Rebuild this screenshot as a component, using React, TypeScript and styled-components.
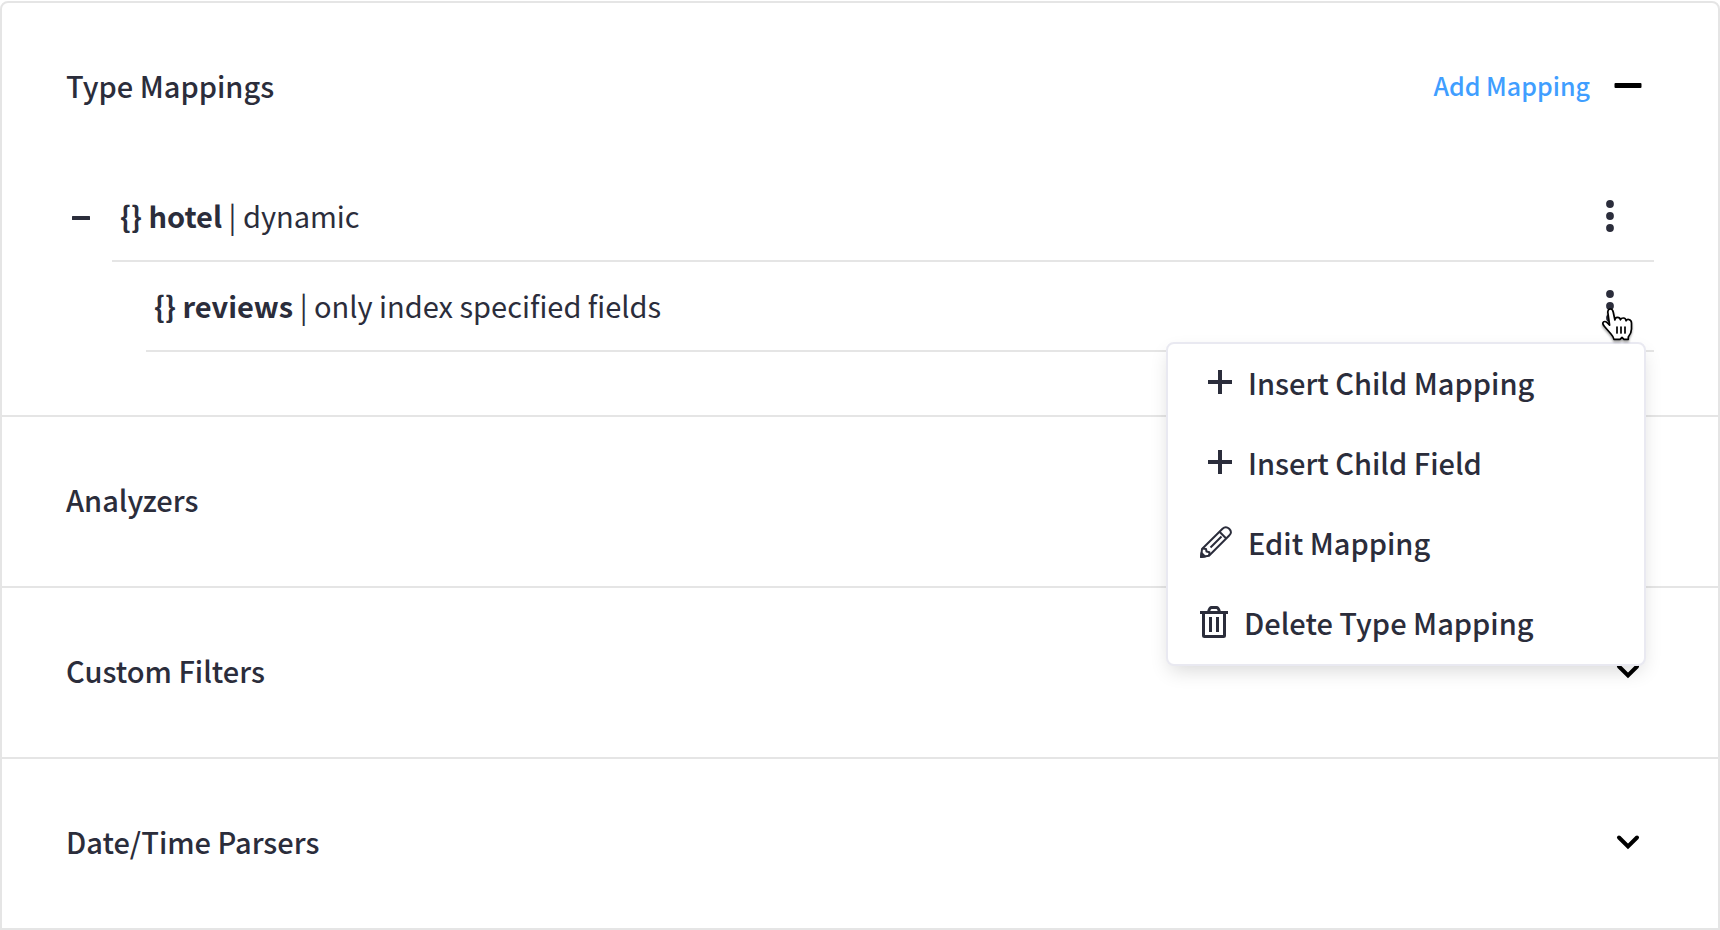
import React from "react";
import styled, { createGlobalStyle } from "styled-components";

const ink = "#2b2d3b";
const line = "#e5e5e5";

const GlobalStyle = createGlobalStyle`
  * { box-sizing: border-box; }
  body { margin: 0; background: #fff; }
  button { font: inherit; color: inherit; background: none; border: 0; padding: 0; margin: 0; cursor: pointer; }
  svg { display: block; flex: none; }
`;

const Panel = styled.main`
  margin-top: 1px;
  border: 2px solid ${line};
  border-radius: 8px 8px 0 0;
  color: ${ink};
  font-family: "Noto Sans CJK SC", "Liberation Sans", sans-serif;
  font-size: 29px;
  line-height: 40px;
`;

const Section = styled.section`
  & + & { border-top: 2px solid ${line}; }
`;

const SectionHeader = styled.header`
  display: flex;
  align-items: center;
  justify-content: space-between;
  padding: 62px 76px 67px 64px;
`;

const Title = styled.h2`
  margin: 0;
  font-size: inherit;
  font-weight: 500;
`;

const Actions = styled.div`
  display: flex;
  align-items: center;
  gap: 24px;
`;

const AddButton = styled.button`
  color: #409eff;
  font-size: 25px;
  font-weight: 500;
`;

const Tree = styled.ul`
  list-style: none;
  margin: 0;
  padding: 0 64px 63px 64px;
`;

const Row = styled.li<{ $depth: number }>`
  position: relative;
  display: flex;
  align-items: center;
  justify-content: space-between;
  height: 90px;
  margin-left: ${({ $depth }) => 46 + $depth * 34}px;
  padding: 0 40px 0 8px;
  border-bottom: 2px solid ${line};
`;

const Collapse = styled.button`
  position: absolute;
  left: -40px;
`;

const RowLabel = styled.span`
  padding-bottom: 2px;
  white-space: pre;
`;

const Menu = styled.div`
  position: absolute;
  z-index: 1;
  top: 80px;
  right: 8px;
  width: 480px;
  background: #fff;
  border: 2px solid #e9e9f1;
  border-radius: 8px;
  box-shadow: 0 8px 20px -4px rgba(0, 0, 0, 0.16);
`;

const MenuItem = styled.button`
  display: flex;
  align-items: center;
  gap: 16px;
  width: 100%;
  height: 80px;
  padding: 0 32px 4px;
  font-weight: 500;
  text-align: left;
`;

const Pointer = styled.svg`
  position: absolute;
  z-index: 2;
  top: 44px;
  right: 18px;
  pointer-events: none;
  filter: drop-shadow(0 2px 1px rgba(0, 0, 0, 0.35));
`;

const MinusIcon = () => (
  <svg width="28" height="28" viewBox="0 0 28 28" fill="#000">
    <rect x="0.5" y="12" width="27" height="5" rx="1" />
  </svg>
);

const ChevronIcon = () => (
  <svg width="28" height="28" viewBox="0 0 28 28" fill="none" stroke="#000" strokeWidth="4" strokeLinecap="round" strokeLinejoin="miter">
    <path d="M5 10.500l9 9 9-9" />
  </svg>
);

const KebabIcon = () => (
  <svg width="8" height="32" viewBox="0 0 8 32" fill={ink}>
    <circle cx="4" cy="4" r="3.9" />
    <circle cx="4" cy="16" r="3.9" />
    <circle cx="4" cy="28" r="3.9" />
  </svg>
);

const PlusIcon = () => (
  <svg width="32" height="32" viewBox="0 0 32 32" stroke={ink} strokeWidth="4">
    <path d="M8 16h24M20 4v24" />
  </svg>
);

const PencilIcon = () => (
  <svg width="32" height="32" viewBox="0 0 32 32" fill="none" stroke={ink} strokeWidth="2" strokeLinejoin="round">
    <path d="M1 31l1-8L22.500 2.800q3.200-3.200 6.700 0 3.500 3.500 0 6.700L9 29.700z" />
    <path d="M19.500 5.800l6.700 6.700M2.500 22.500l3.500.5.500 2.500 3 .7-.5 3.500M10.500 21.500L21.500 10.500" />
    <path d="M1 31l.5-4 3.500 3.500z" fill={ink} />
  </svg>
);

const TrashIcon = () => (
  <svg width="28" height="32" viewBox="0 0 28 32" fill="none" stroke={ink} strokeWidth="3">
    <path d="M0 6.500h28M3.500 7v22.500q0 1 1 1h19q1 0 1-1V7M8.500 6q1-4.500 3-4.500h5q2 0 3 4.500M10.500 11v15M17.500 11v15" />
  </svg>
);

const HandPointer = () => (
  <Pointer width="36" height="36" viewBox="0 0 36 36" fill="#fff" stroke="#000" strokeWidth="1.700" strokeLinejoin="round" strokeLinecap="round" aria-hidden="true">
    <path d="M7.800 6Q8 3 10.400 3q2.200 0 2.800 3l1.700 8q0-2.700 2.600-2.700 2.500 0 3 2.500.8-2 3-1.800 2.300.3 2.500 2.800.8-1.700 2.800-1.300 2.700.7 2.700 3.500v6q0 4-3.200 8v2.300h-4.300L22 31.500l-2 1.800h-6q-.5-2.500-3-5.300L4.500 20.500Q2.300 18 3 16.500q1.500-2 4 0l2.600 2.700z" />
    <path d="M17 21v6M21 21v6M25 21v6" />
  </Pointer>
);

const sections = ["Analyzers", "Custom Filters", "Date/Time Parsers"];

export default function App() {
  return (
    <>
      <GlobalStyle />
      <Panel>
        <Section>
          <SectionHeader>
            <Title>Type Mappings</Title>
            <Actions>
              <AddButton type="button">Add Mapping</AddButton>
              <button type="button" aria-label="Collapse Type Mappings"><MinusIcon /></button>
            </Actions>
          </SectionHeader>
          <Tree>
            <Row $depth={0}>
              <Collapse type="button" aria-label="Collapse hotel">
                <svg width="18" height="8" viewBox="0 0 18 8" fill={ink}><rect y="4" width="18" height="4" rx="0.5" /></svg>
              </Collapse>
              <RowLabel><b>{"{}"} hotel</b> | dynamic</RowLabel>
              <button type="button" aria-label="hotel actions"><KebabIcon /></button>
            </Row>
            <Row $depth={1}>
              <RowLabel><b>{"{}"} reviews</b> | only index specified fields</RowLabel>
              <button type="button" aria-label="reviews actions"><KebabIcon /></button>
              <Menu role="menu">
                <MenuItem type="button" role="menuitem"><PlusIcon />Insert Child Mapping</MenuItem>
                <MenuItem type="button" role="menuitem"><PlusIcon />Insert Child Field</MenuItem>
                <MenuItem type="button" role="menuitem"><PencilIcon />Edit Mapping</MenuItem>
                <MenuItem type="button" role="menuitem"><TrashIcon />Delete Type Mapping</MenuItem>
              </Menu>
              <HandPointer />
            </Row>
          </Tree>
        </Section>
        {sections.map((name) => (
          <Section key={name}>
            <SectionHeader>
              <Title>{name}</Title>
              <button type="button" aria-label={`Expand ${name}`}><ChevronIcon /></button>
            </SectionHeader>
          </Section>
        ))}
      </Panel>
    </>
  );
}
